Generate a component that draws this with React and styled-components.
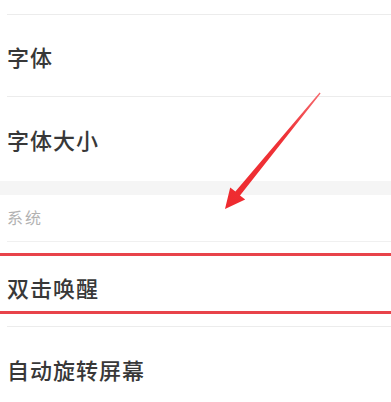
import React from 'react'
import styled, { createGlobalStyle } from 'styled-components'

const GlobalStyle = createGlobalStyle`
  html, body {
    margin: 0;
    padding: 0;
    background: #ffffff;
  }
  body {
    font-family: "Noto Sans CJK SC", "Noto Sans", sans-serif;
    overflow: hidden;
  }
`

const App = () => {
  return (
    <Page>
      <GlobalStyle />
      <TopEdge />
      <Row divider>
        <Label>字体</Label>
      </Row>
      <Row height={84}>
        <Label>字体大小</Label>
      </Row>
      <SectionGap />
      <SectionHeader>系统</SectionHeader>
      <Row height={85} divider>
        <Highlight />
        <Label offset={5}>双击唤醒</Label>
      </Row>
      <Row height={84}>
        <Label>自动旋转屏幕</Label>
      </Row>
      <Arrow width="391" height="402" viewBox="0 0 391 402">
        <defs>
          <linearGradient id="arrowFill" x1="320" y1="93" x2="225" y2="209" gradientUnits="userSpaceOnUse">
            <stop offset="0" stopColor="#f56a6e" />
            <stop offset="0.35" stopColor="#ef3338" />
            <stop offset="1" stopColor="#ee2a2f" />
          </linearGradient>
        </defs>
        <polygon
          points="320.6,93.4 240.0,195.4 245.2,199.6 225,209 230.2,187.4 235.4,191.6 319.6,92.6"
          fill="url(#arrowFill)"
        />
      </Arrow>
    </Page>
  )
}

export default App

const Page = styled.div`
  position: relative;
  width: 391px;
  height: 402px;
  overflow: hidden;
  background: #ffffff;
`

const TopEdge = styled.div`
  height: 14px;
  margin-left: 7px;
  border-bottom: 1px solid #ececec;
`

const Row = styled.div`
  position: relative;
  display: flex;
  align-items: center;
  height: ${p => (p.height || 82) - (p.divider ? 1 : 0)}px;
  margin-left: 7px;
  border-bottom: ${p => (p.divider ? '1px solid #ececec' : 'none')};
`

const Label = styled.span`
  font-size: 22px;
  letter-spacing: 1px;
  font-weight: 500;
  color: #383838;
  padding-top: ${p => p.offset || 0}px;
`

const SectionGap = styled.div`
  height: 14px;
  background: #f5f5f5;
`

const SectionHeader = styled.div`
  display: flex;
  align-items: center;
  height: 47px;
  margin-left: 7px;
  padding-bottom: 2px;
  box-sizing: border-box;
  border-bottom: 1px solid #f0f0f0;
  font-size: 16px;
  letter-spacing: 2px;
  color: #b2b2b2;
`

const Highlight = styled.div`
  position: absolute;
  top: 11px;
  left: -7px;
  right: 0;
  height: 55px;
  border-top: 3px solid #e8434a;
  border-bottom: 3px solid #e8434a;
  pointer-events: none;
`

const Arrow = styled.svg`
  position: absolute;
  top: 0;
  left: 0;
  pointer-events: none;
`
